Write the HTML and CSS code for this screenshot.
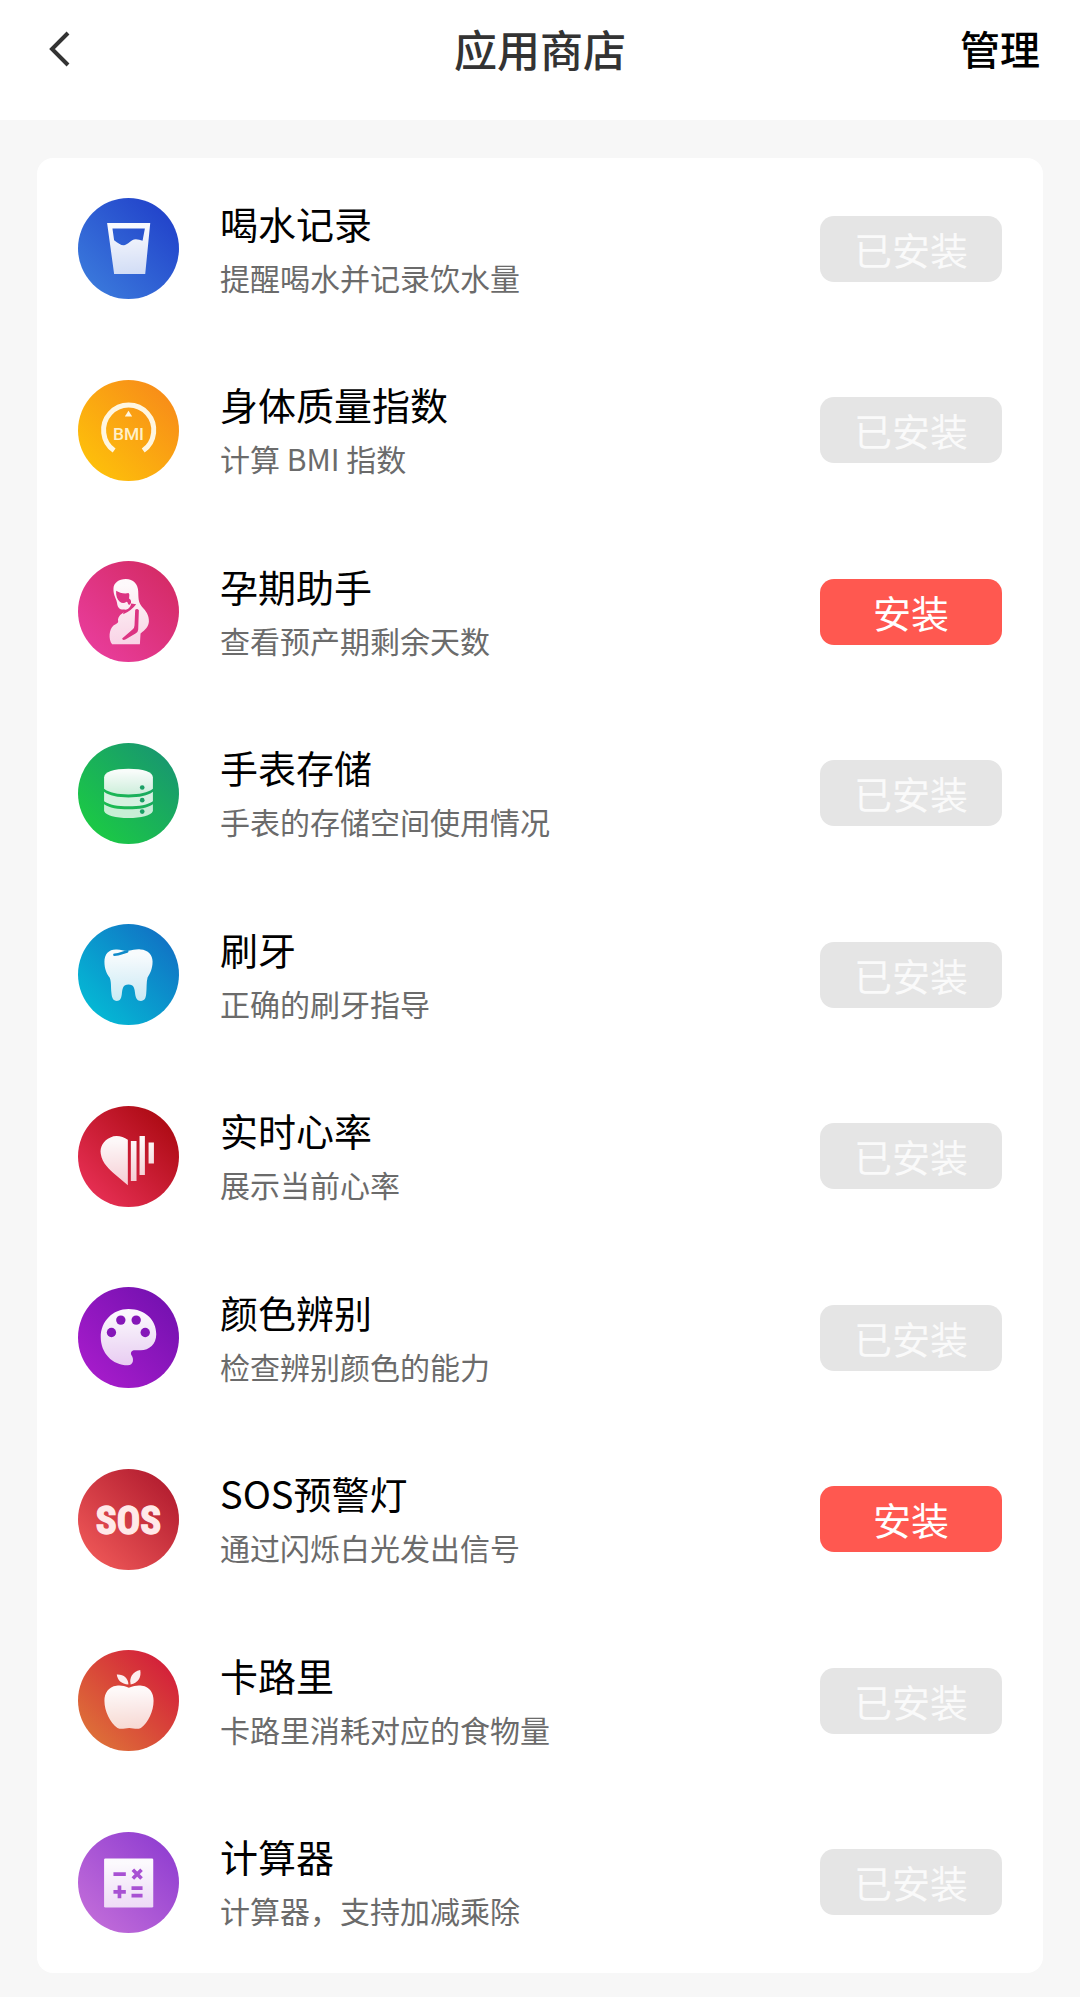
FILE: index.html
```html
<!DOCTYPE html>
<html lang="zh-CN">
<head>
  <meta charset="UTF-8">
  <meta name="viewport" content="width=device-width, initial-scale=1.0">
  <title>应用商店</title>
  <link rel="stylesheet" href="styles.css">
</head>
<body>

  <svg class="defs" width="0" height="0" aria-hidden="true">
    <defs>
      <linearGradient id="fade" x1="0" y1="0" x2="0" y2="1">
        <stop offset="0.1" stop-color="#fff" stop-opacity="0.97"/>
        <stop offset="1" stop-color="#fff" stop-opacity="0.78"/>
      </linearGradient>
    </defs>
  </svg>

  <header class="topbar">
    <button class="back" aria-label="返回">
      <svg viewBox="0 0 24 38"><path d="M20 3 L4 19 L20 35"/></svg>
    </button>
    <h1>应用商店</h1>
    <button class="manage">管理</button>
  </header>

  <main>
    <ul class="app-list">
      <li class="app">
        <svg class="icon water" viewBox="31 35 302 302">
          <path fill="url(#fade)" fill-rule="evenodd" d="M118 110 H247 L232 262 H139 Z M134 126 L139 161 C151 170 160 177 169 176 C182 174 187 159 204 158 Q214 158 224 163 L231 126 Z"/>
        </svg>
        <div class="info">
          <h2>喝水记录</h2>
          <p>提醒喝水并记录饮水量</p>
        </div>
        <button class="action" disabled>已安装</button>
      </li>
      <li class="app">
        <svg class="icon bmi" viewBox="31 35 302 302">
          <path fill="none" stroke="#fff6e0" stroke-width="15" d="M139 246 A75 75 0 1 1 226 246"/>
          <path fill="#fff6e0" d="M182 127 L193 144 H171 Z"/>
          <text class="bmi-text" x="182" y="215">BMI</text>
        </svg>
        <div class="info">
          <h2>身体质量指数</h2>
          <p>计算 BMI 指数</p>
        </div>
        <button class="action" disabled>已安装</button>
      </li>
      <li class="app">
        <svg class="icon pregnancy" viewBox="31 35 302 302">
          <path fill="url(#fade)" d="M137 118 C137 101 153 89 174 89 C197 89 210 105 211 125 C212 146 211 158 221 170 C233 183 244 196 243 216 C242 231 233 240 218 252 L216 284 H133 C121 269 124 239 137 228 C144 223 152 221 151 215 C149 207 153 198 164 191 C170 187 172 182 170 180 C157 182 149 174 148 162 C147 150 136 137 137 118 Z"/>
          <path fill="#dc3482" d="M145 124 C154 130 169 134 182 131 C187 136 183 142 184 148 C192 152 191 163 185 166 C180 167 181 158 176 157 C170 162 162 162 156 157 C148 150 144 139 145 124 Z"/>
          <path fill="#dc3482" d="M168 181 C180 181 188 174 190 162 L205 164 Q190 184 166 194 Z"/>
          <path fill="#dc3482" d="M202 181 Q208 175 213 182 L211 240 Q211 247 203 252 L174 269 Q164 274 163 267 L194 240 Q200 235 200 227 Z"/>
        </svg>
        <div class="info">
          <h2>孕期助手</h2>
          <p>查看预产期剩余天数</p>
        </div>
        <button class="action">安装</button>
      </li>
      <li class="app">
        <svg class="icon storage" viewBox="31 35 302 302">
          <path fill="url(#fade)" d="M109 138 C109 122 138 112 182 112 C226 112 255 122 255 138 V172 C240 184 214 189 182 189 C150 189 124 184 109 172 Z"/>
          <path fill="#fff" fill-opacity="0.82" d="M109 181 C124 193 150 198 182 198 C214 198 240 193 255 181 V209 C240 220 214 224 182 224 C150 224 124 220 109 209 Z"/>
          <path fill="#fff" fill-opacity="0.76" d="M109 218 C124 229 150 233 182 233 C214 233 240 229 255 218 V238 C250 252 220 259 182 259 C144 259 114 252 109 238 Z"/>
          <g fill="#1a9f65">
            <circle cx="223" cy="168" r="7"/>
            <circle cx="223" cy="206" r="7"/>
            <circle cx="223" cy="240" r="7"/>
          </g>
        </svg>
        <div class="info">
          <h2>手表存储</h2>
          <p>手表的存储空间使用情况</p>
        </div>
        <button class="action" disabled>已安装</button>
      </li>
      <li class="app">
        <svg class="icon tooth" viewBox="31 35 302 302">
          <path fill="url(#fade)" d="M110 148 C110 125 123 111 144 111 C159 110 168 116 182 115 C196 113 202 110 218 111 C241 112 254 128 254 147 C254 169 246 184 239 195 C235 210 237 226 235 243 C234 257 230 265 219 265 C208 265 204 257 202 245 C200 228 199 216 182 216 C165 216 164 228 162 245 C160 258 157 265 147 265 C136 265 132 255 131 242 C129 222 131 211 126 196 C117 185 110 169 110 148 Z"/>
          <path fill="none" stroke="#0f8ac9" stroke-width="8" stroke-linecap="round" d="M140 127 C154 127 164 121 178 117"/>
        </svg>
        <div class="info">
          <h2>刷牙</h2>
          <p>正确的刷牙指导</p>
        </div>
        <button class="action" disabled>已安装</button>
      </li>
      <li class="app">
        <svg class="icon heart" viewBox="31 35 302 302">
          <path fill="url(#fade)" d="M180 136 C165 126 145 121 128 129 C107 138 96 157 99 178 C103 208 127 226 142 240 L180 272 Z"/>
          <path fill="url(#fade)" d="M189 140 H206 V259 H189 Z M215 125 H231 V241 H215 Z M242 144 H258 V207 H242 Z"/>
        </svg>
        <div class="info">
          <h2>实时心率</h2>
          <p>展示当前心率</p>
        </div>
        <button class="action" disabled>已安装</button>
      </li>
      <li class="app">
        <svg class="icon palette" viewBox="31 35 302 302">
          <path fill="url(#fade)" d="M182 101 C232 101 265 134 265 176 C265 206 244 224 218 224 H201 C190 224 187 232 191 239 C199 250 197 269 180 269 C133 269 99 231 99 185 C99 138 135 101 182 101 Z"/>
          <g fill="#8517b8">
            <circle cx="131" cy="171" r="14"/>
            <circle cx="159" cy="134" r="14"/>
            <circle cx="205" cy="134" r="14"/>
            <circle cx="232" cy="171" r="14"/>
          </g>
        </svg>
        <div class="info">
          <h2>颜色辨别</h2>
          <p>检查辨别颜色的能力</p>
        </div>
        <button class="action" disabled>已安装</button>
      </li>
      <li class="app">
        <svg class="icon sos" viewBox="31 35 302 302">
          <text class="sos-text" x="182" y="230">SOS</text>
        </svg>
        <div class="info">
          <h2>SOS预警灯</h2>
          <p>通过闪烁白光发出信号</p>
        </div>
        <button class="action">安装</button>
      </li>
      <li class="app">
        <svg class="icon calorie" viewBox="31 35 302 302">
          <path fill="url(#fade)" d="M183 148 C199 142 210 140 222 142 C246 145 257 164 257 187 C257 218 241 253 219 268 C207 274 197 268 184 268 C171 268 161 274 149 268 C127 253 110 218 110 187 C110 164 122 145 146 142 C158 140 169 142 183 148 Z"/>
          <path fill="#fdeeee" d="M182 138 C160 137 149 124 147 108 C168 107 181 119 182 138 Z"/>
          <path fill="#fdeeee" d="M188 138 C184 118 194 100 217 95 C221 116 212 134 188 138 Z"/>
          <path fill="none" stroke="#d94436" stroke-width="4" d="M185 130 V146"/>
        </svg>
        <div class="info">
          <h2>卡路里</h2>
          <p>卡路里消耗对应的食物量</p>
        </div>
        <button class="action" disabled>已安装</button>
      </li>
      <li class="app">
        <svg class="icon calculator" viewBox="31 35 302 302">
          <rect fill="url(#fade)" x="109" y="114" width="147" height="147" rx="4"/>
          <path fill="none" stroke="#a851d3" stroke-width="11" d="M137 161 H174 M137 214 H174 M155 195 V233 M191 203 H224 M191 225 H224 M195 148 L221 174 M221 148 L195 174"/>
        </svg>
        <div class="info">
          <h2>计算器</h2>
          <p>计算器，支持加减乘除</p>
        </div>
        <button class="action" disabled>已安装</button>
      </li>
    </ul>
  </main>

</body>
</html>
```

FILE: styles.css
```css
* {
  box-sizing: border-box;
}
body {
  margin: 0;
  min-height: 100vh;
  display: flex;
  flex-direction: column;
  background: #f7f7f7;
  color: #000;
  font-family: "Noto Sans CJK SC", sans-serif;
}
.defs {
  position: absolute;
}
h1, h2, p, ul {
  margin: 0;
  padding: 0;
}
button {
  border: none;
  padding: 0;
  background: none;
  font-family: inherit;
  cursor: pointer;
}

/* top bar */
.topbar {
  display: grid;
  grid-template-columns: 1fr auto 1fr;
  align-items: center;
  height: 120px;
  padding: 0 40px 24px;
  background: #fff;
}
.topbar h1 {
  font-size: 43px;
  line-height: 60px;
  font-weight: 500;
  color: #333;
}
.back {
  justify-self: start;
  display: flex;
  padding: 2px 8px 0;
}
.back svg {
  width: 24px;
  height: 38px;
  fill: none;
  stroke: #333;
  stroke-width: 4;
}
.manage {
  justify-self: end;
  font-size: 40px;
  line-height: 60px;
  font-weight: 500;
  color: #000;
}

/* app list */
main {
  flex: 1;
  display: flex;
  padding: 38px 37px 24px;
}
.app-list {
  flex: 1;
  display: flex;
  flex-direction: column;
  list-style: none;
  background: #fff;
  border-radius: 16px;
}
.app {
  flex: 1;
  display: flex;
  align-items: center;
  gap: 41px;
  padding: 0 41px;
}
.icon {
  flex: none;
  width: 101px;
  height: 101px;
  border-radius: 50%;
}
.info {
  flex: 1;
  padding-bottom: 0;
}
.info h2 {
  font-size: 38px;
  line-height: 56px;
  font-weight: 400;
}
.info p {
  font-size: 30px;
  line-height: 52px;
  color: #6b6b6b;
}
.action {
  width: 182px;
  height: 66px;
  border-radius: 14px;
  background: #ff5850;
  color: #fff;
  font-size: 38px;
  line-height: 66px;
}
.action:disabled {
  background: #e5e5e5;
  color: #fafafa;
  cursor: default;
}

/* icon colours */
.water {
  background: linear-gradient(45deg, #3c7ddd 5%, #2345cb 85%);
}
.bmi {
  background: linear-gradient(45deg, #fec10a 10%, #f7881a 95%);
}
.pregnancy {
  background: linear-gradient(45deg, #e93d9c 10%, #d42b65 90%);
}
.storage {
  background: linear-gradient(45deg, #1bcb43 10%, #189373 95%);
}
.tooth {
  background: linear-gradient(45deg, #04bbd5 10%, #126cc3 95%);
}
.heart {
  background: linear-gradient(45deg, #e83055 10%, #ab0a12 90%);
}
.palette {
  background: linear-gradient(45deg, #a71ccb 10%, #7411b0 90%);
}
.sos {
  background: linear-gradient(45deg, #ee5757 10%, #b21c2f 90%);
}
.calorie {
  background: linear-gradient(45deg, #de7238 10%, #d31d3a 90%);
}
.calculator {
  background: linear-gradient(45deg, #c16cd9 10%, #8d3bd0 95%);
}
.bmi-text {
  font: 500 52px Roboto, sans-serif;
  fill: #fff0c8;
  text-anchor: middle;
}
.sos-text {
  font: 700 116px "Liberation Sans Narrow", "Roboto Condensed", sans-serif;
  fill: #ffe9e9;
  stroke: #ffe9e9;
  stroke-width: 4;
  text-anchor: middle;
}
```
